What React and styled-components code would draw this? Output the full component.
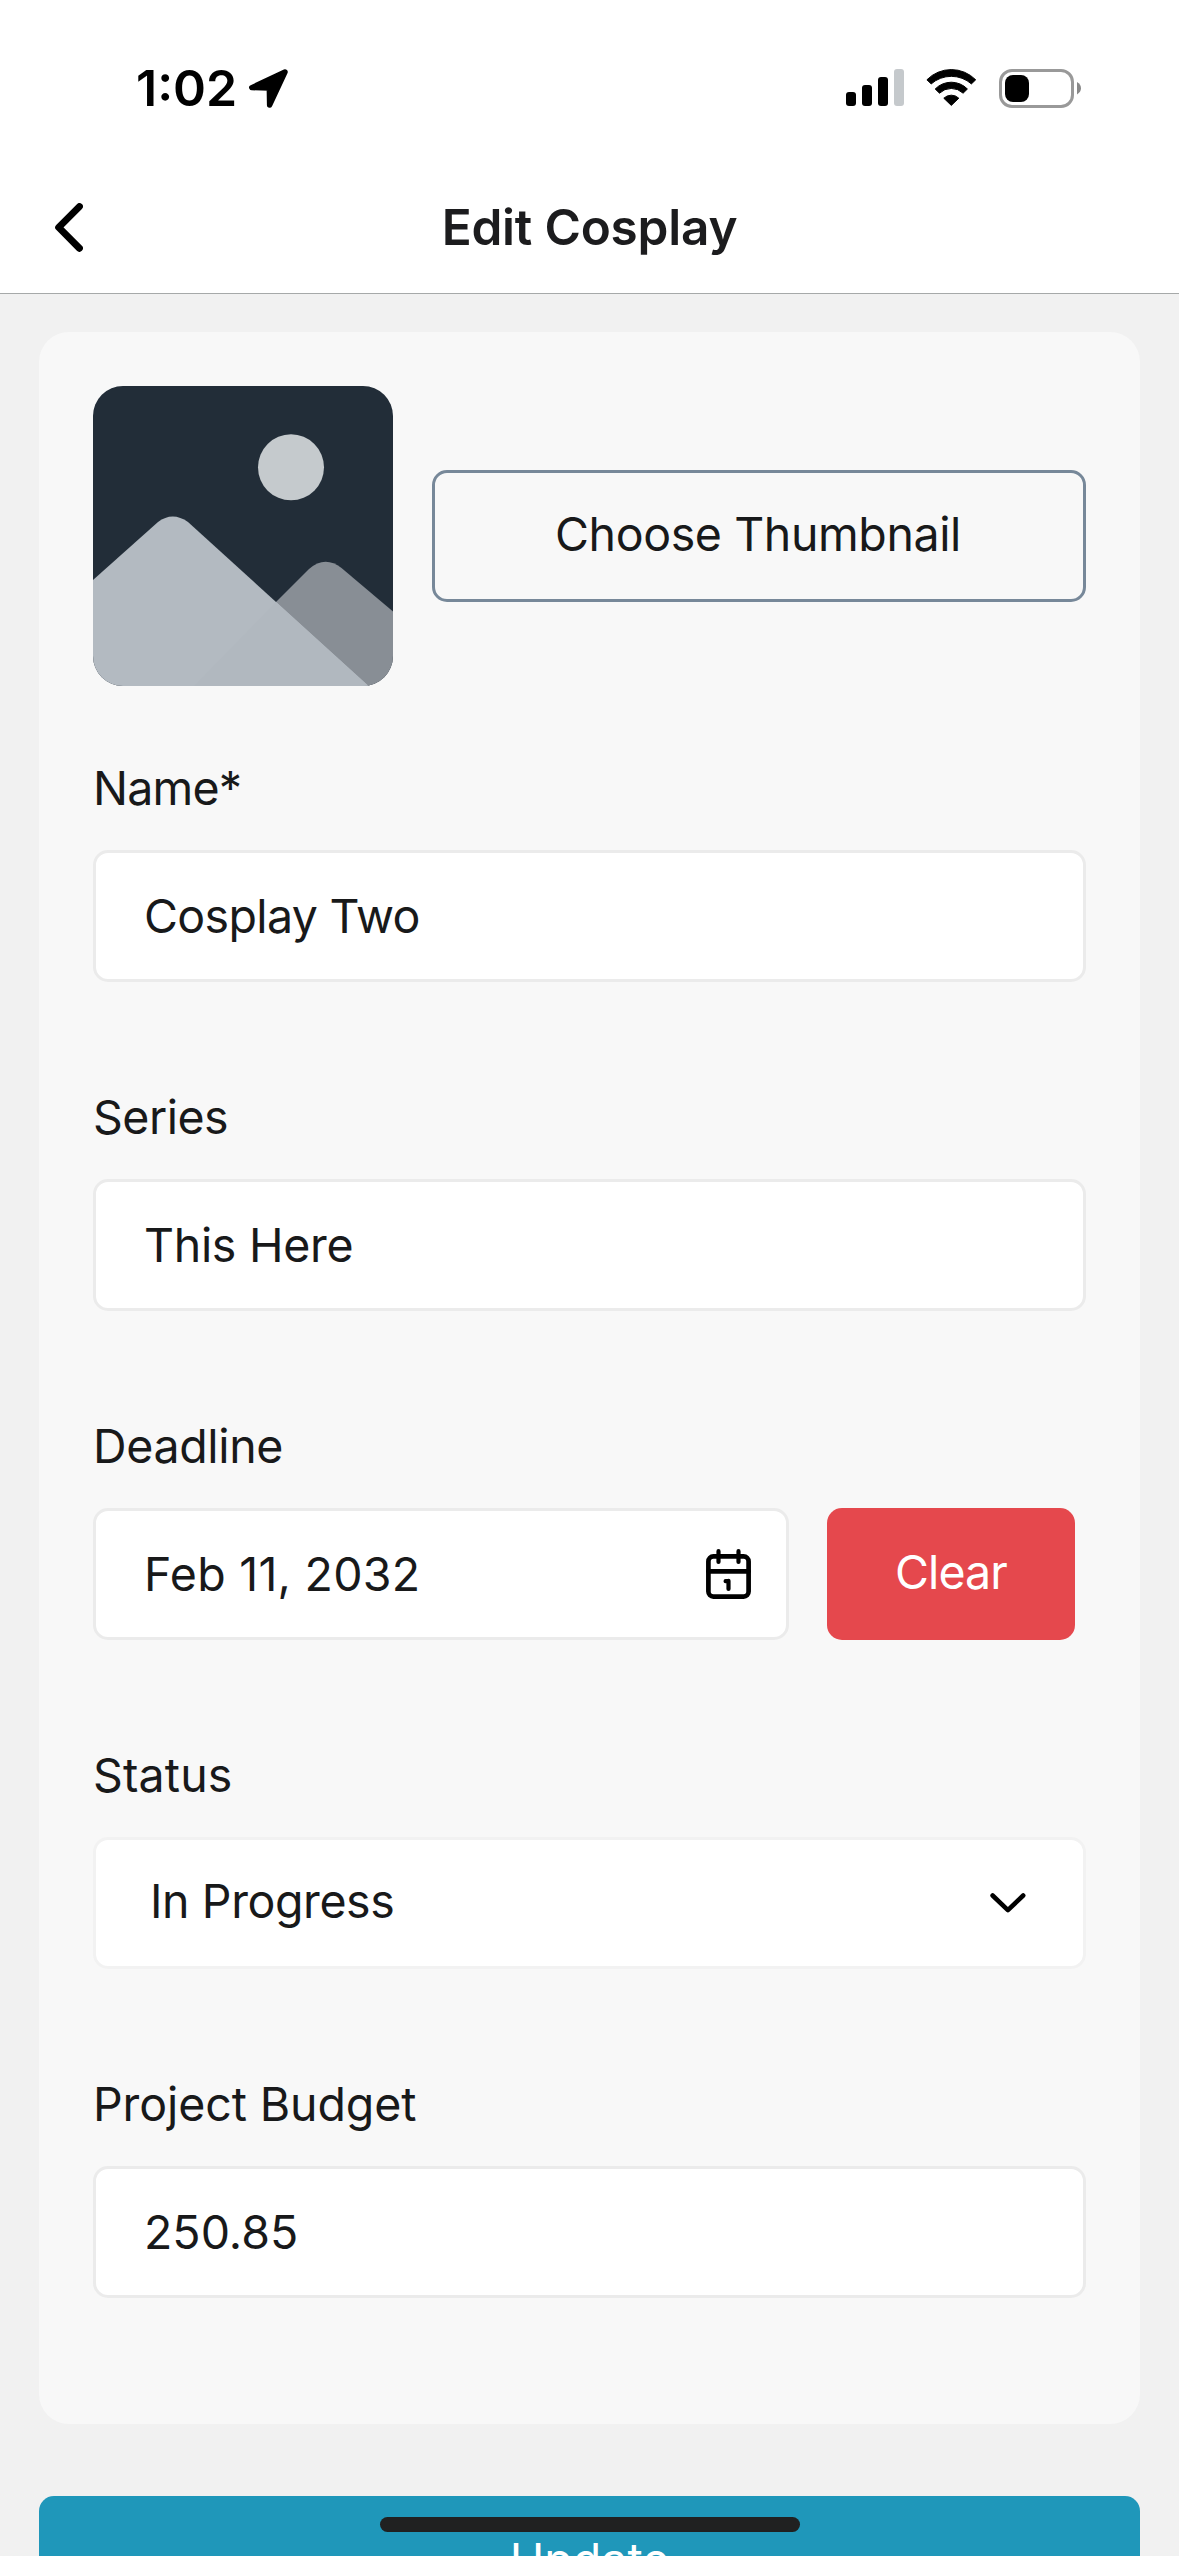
import React from 'react';
import styled, { createGlobalStyle } from 'styled-components';

const GlobalStyle = createGlobalStyle`
  * { box-sizing: border-box; }
  html, body { margin: 0; padding: 0; background: #f1f1f1; }
  body {
    font-family: Inter, "Liberation Sans", sans-serif;
    font-size: 46.5px;
    color: #18191a;
  }
`;

const Screen = styled.div`
  position: relative;
  display: flex;
  flex-direction: column;
  width: 1179px;
  height: 2556px;
  overflow: hidden;
  background: #f1f1f1;
`;

const Header = styled.header`
  flex: none;
  background: #fff;
  border-bottom: 1px solid #a6a9a9;
`;

const StatusBar = styled.div`
  display: flex;
  align-items: center;
  height: 161px;
  padding: 15px 98px 0 136px;
`;

const Time = styled.span`
  width: 113px;
  font-size: 50px;
  font-weight: 600;
  line-height: 60px;
  color: #000;
  white-space: nowrap;
`;

const StatusIcons = styled.div`
  display: flex;
  align-items: center;
  gap: 22px;
  margin-left: auto;
`;

const NavBar = styled.nav`
  display: grid;
  grid-template-columns: 200px 1fr 200px;
  align-items: center;
  height: 132px;
`;

const BackButton = styled.button`
  display: flex;
  align-items: center;
  height: 132px;
  padding: 0 0 0 54px;
  border: 0;
  background: none;
`;

const Title = styled.h1`
  margin: 0;
  font-size: 49.5px;
  font-weight: 600;
  line-height: 60px;
  letter-spacing: -0.2px;
  text-align: center;
  color: #1c1c1e;
`;

const Icon = styled.svg`
  display: block;
  flex: none;
`;

const Content = styled.main`
  display: flex;
  flex-direction: column;
  gap: 72px;
  padding: 38px 39px 0;
`;

const Card = styled.section`
  flex: none;
  padding: 54px 54px 126px;
  border-radius: 30px;
  background: #f8f8f8;
`;

const ThumbnailRow = styled.div`
  display: flex;
  align-items: center;
  gap: 39px;
  margin-bottom: 74px;
`;

const Thumbnail = styled.div`
  flex: none;
  width: 300px;
  height: 300px;
  border-radius: 30px;
  overflow: hidden;
`;

const BaseButton = styled.button`
  display: flex;
  align-items: center;
  justify-content: center;
  flex: none;
  height: 132px;
  padding: 0 0 4px;
  border: 0;
  border-radius: 15px;
  font: inherit;
  letter-spacing: ${(p) => p.$tracking || 0}px;
  white-space: nowrap;
`;

const OutlineButton = styled(BaseButton)`
  flex: 1;
  padding-right: 2px;
  border: 3px solid #778899;
  background: transparent;
  color: #18191a;
`;

const DangerButton = styled(BaseButton)`
  width: 248px;
  background: #e5484d;
  color: #fff;
`;

const PrimaryButton = styled(BaseButton)`
  background: #1f97ba;
  color: #fff;
`;

const Fields = styled.div`
  display: flex;
  flex-direction: column;
  gap: 107px;
`;

const Field = styled.div`
  display: flex;
  flex-direction: column;
  gap: 34px;
`;

const Text = styled.span`
  line-height: 56px;
  letter-spacing: ${(p) => p.$tracking || 0}px;
  white-space: nowrap;
`;

const FieldRow = styled.div`
  display: flex;
  gap: 38px;
`;

const InputBox = styled.div`
  display: flex;
  align-items: center;
  justify-content: space-between;
  flex: none;
  width: ${(p) => p.$width || 993}px;
  height: 132px;
  padding: 0 35px 0 48px;
  border: 3px solid #ebebeb;
  border-radius: 15px;
  background: #fff;
`;

const SelectBox = styled(InputBox)`
  padding: 0 57px 0 54px;
  border-color: #f2f2f2;

  ${Text} { padding-bottom: 4px; }
`;

const HomeIndicator = styled.div`
  position: absolute;
  left: 380px;
  bottom: 24px;
  width: 420px;
  height: 15px;
  border-radius: 8px;
  background: #202121;
`;

const LocationArrow = () => (
  <Icon width="39" height="39" viewBox="0 0 39 39">
    <path d="M36 3 2.8 18.6 20.3 19 20.6 36Z" stroke="#000" strokeWidth="5.4" strokeLinejoin="round" />
  </Icon>
);

const SignalBars = () => (
  <Icon width="58" height="38" viewBox="0 0 58 38">
    <rect x="0" y="23" width="10" height="14" rx="3" />
    <rect x="16" y="16" width="10" height="21" rx="3" />
    <rect x="32" y="8" width="10" height="29" rx="3" />
    <rect x="48" y="0" width="10" height="37" rx="3" fill="#c5c9cc" />
  </Icon>
);

const Wifi = () => (
  <Icon width="51" height="38" viewBox="0 0 51 38">
    <g stroke="#000" strokeWidth="1" strokeLinejoin="round">
      <path d="M.9 10.8A34.2 34.2 0 0 1 49.7 10.8L45.4 14.9A30.5 30.5 0 0 0 5.2 14.9Z" />
      <path d="M9.2 20A22.5 22.5 0 0 1 41.4 20L37.1 24.2A17 17 0 0 0 13.5 24.2Z" />
      <path d="M17.8 29.2A10.8 10.8 0 0 1 32.8 29.2L25.3 36.4Z" />
    </g>
  </Icon>
);

const Battery = () => (
  <Icon width="82" height="39" viewBox="0 0 82 39">
    <rect x="1.5" y="1.5" width="72" height="36" rx="11.5" fill="none" stroke="#999" strokeWidth="3" />
    <rect x="6" y="6" width="24" height="27" rx="8" />
    <path d="M78 13Q82 15.5 82 19.2T78 25.4Z" fill="#888" />
  </Icon>
);

const BackChevron = () => (
  <Icon width="29" height="49" viewBox="0 0 29 49">
    <path d="M25.4 3.6 4.7 24.4 25.4 45.3" fill="none" stroke="#000" strokeWidth="7" strokeLinecap="round" strokeLinejoin="round" />
  </Icon>
);

const MountainPicture = () => (
  <Icon width="300" height="300" viewBox="0 0 300 300">
    <rect width="300" height="300" fill="#222d38" />
    <circle cx="198" cy="81.3" r="33" fill="#c5cacd" />
    <path d="M99 300 216 183Q232 169 248.5 182L300 225.5V300Z" fill="#888e95" />
    <path d="M0 194 65 136Q79.5 125 95 136L275.5 300H0Z" fill="#b3bac1" />
    <path d="M183 216 275.5 300H101Z" fill="#b1b8bf" />
  </Icon>
);

const CalendarIcon = () => (
  <Icon width="45" height="50" viewBox="0 0 45 50">
    <g fill="none" stroke="#000" strokeWidth="4.7" strokeLinecap="round" strokeLinejoin="round">
      <rect x="2.4" y="7.4" width="40.2" height="40.2" rx="5" />
      <path d="M2.4 22.3H42.6" />
      <path d="M12.5 2.2V13M32.5 2.2V13" strokeWidth="4.2" />
      <path d="M19.6 32.2Q22.5 32.2 22.5 31.8V40" strokeWidth="4.2" />
    </g>
  </Icon>
);

const DownChevron = () => (
  <Icon width="36" height="20" viewBox="0 0 36 20">
    <path d="M2.6 2.5 17.9 17.2 33.2 2.5" fill="none" stroke="#000" strokeWidth="4.6" strokeLinecap="round" strokeLinejoin="round" />
  </Icon>
);

export default function App() {
  return (
    <>
      <GlobalStyle />
      <Screen>
        <Header>
          <StatusBar>
            <Time>1:02</Time>
            <LocationArrow />
            <StatusIcons>
              <SignalBars />
              <Wifi />
              <Battery />
            </StatusIcons>
          </StatusBar>
          <NavBar>
            <BackButton aria-label="Back"><BackChevron /></BackButton>
            <Title>Edit Cosplay</Title>
          </NavBar>
        </Header>
        <Content>
          <Card>
            <ThumbnailRow>
              <Thumbnail><MountainPicture /></Thumbnail>
              <OutlineButton $tracking={-0.4}>Choose Thumbnail</OutlineButton>
            </ThumbnailRow>
            <Fields>
              <Field>
                <Text $tracking={-0.8}>Name*</Text>
                <InputBox><Text $tracking={-0.65}>Cosplay Two</Text></InputBox>
              </Field>
              <Field>
                <Text $tracking={-0.5}>Series</Text>
                <InputBox><Text $tracking={-0.3}>This Here</Text></InputBox>
              </Field>
              <Field>
                <Text $tracking={-0.35}>Deadline</Text>
                <FieldRow>
                  <InputBox $width={696}>
                    <Text $tracking={0.25}>Feb 11, 2032</Text>
                    <CalendarIcon />
                  </InputBox>
                  <DangerButton $tracking={-0.9}>Clear</DangerButton>
                </FieldRow>
              </Field>
              <Field>
                <Text $tracking={0.15}>Status</Text>
                <SelectBox>
                  <Text $tracking={-0.4}>In Progress</Text>
                  <DownChevron />
                </SelectBox>
              </Field>
              <Field>
                <Text $tracking={-0.1}>Project Budget</Text>
                <InputBox><Text>250.85</Text></InputBox>
              </Field>
            </Fields>
          </Card>
          <PrimaryButton>Update</PrimaryButton>
        </Content>
        <HomeIndicator />
      </Screen>
    </>
  );
}
